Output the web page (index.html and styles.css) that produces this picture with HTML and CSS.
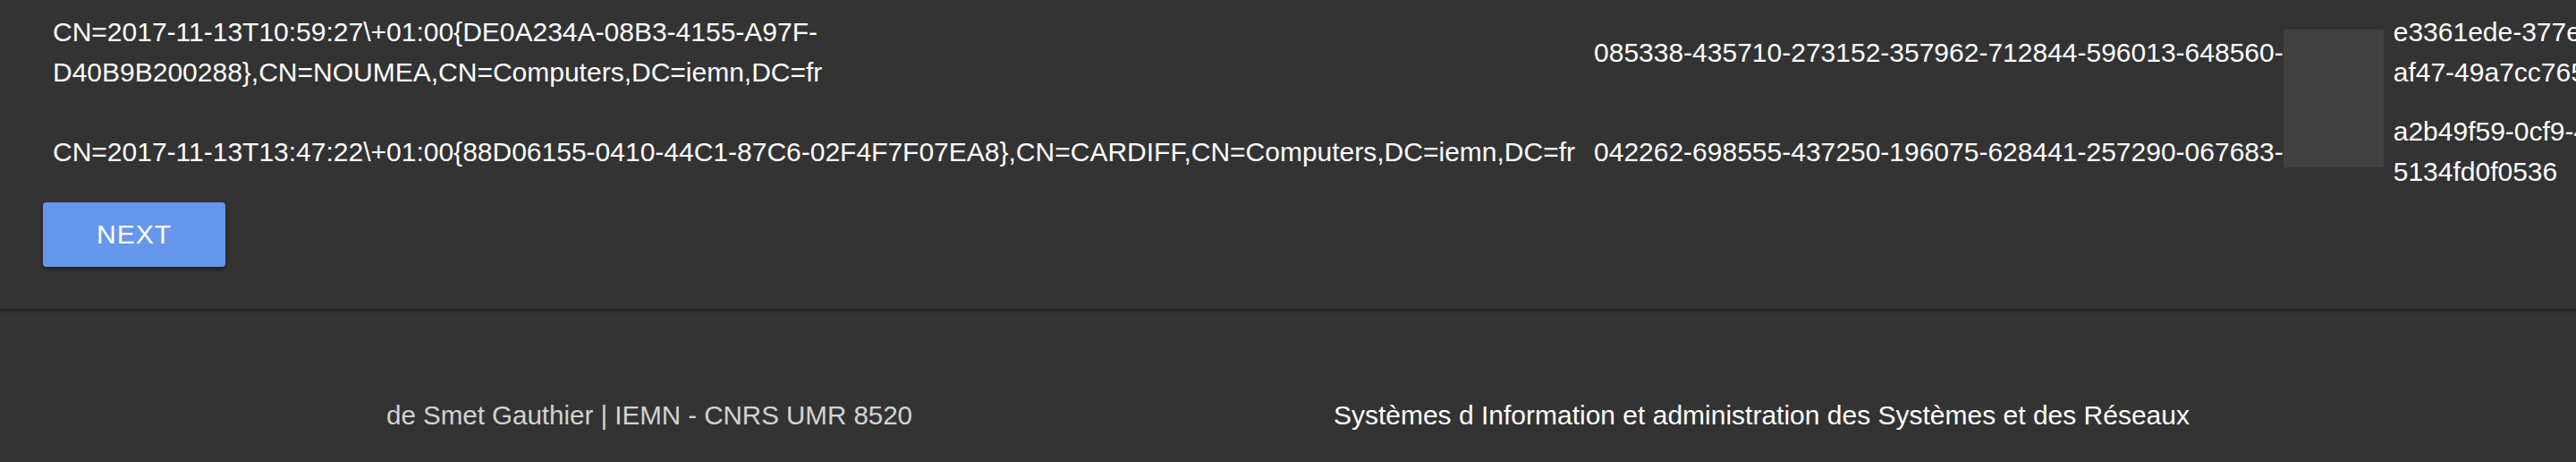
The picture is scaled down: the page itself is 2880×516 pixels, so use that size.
FILE: index.html
```html
<!DOCTYPE html>
<html lang="fr">
<head>
<meta charset="utf-8">
<title>Computers</title>
<link rel="stylesheet" href="styles.css">
</head>
<body>
<main class="main">
  <div class="grid">
    <div class="cell dn">CN=2017-11-13T10:59:27\+01:00{DE0A234A-08B3-4155-A97F-D40B9B200288},CN=NOUMEA,CN=Computers,DC=iemn,DC=fr</div>
    <div class="cell sid">085338-435710-273152-357962-712844-596013-648560-</div>
    <div class="blank"></div>
    <div class="cell guid">e3361ede-377e-4a3d-af47-49a7cc765e2d</div>

    <div class="cell dn nowrap">CN=2017-11-13T13:47:22\+01:00{88D06155-0410-44C1-87C6-02F4F7F07EA8},CN=CARDIFF,CN=Computers,DC=iemn,DC=fr</div>
    <div class="cell sid">042262-698555-437250-196075-628441-257290-067683-</div>
    <div class="cell guid">a2b49f59-0cf9-4ff1-af1f-5134fd0f0536</div>
  </div>
  <div class="actions">
    <button class="btn" type="button">NEXT</button>
  </div>
</main>
<footer class="footer">
  <div class="footer-inner">
    <span class="copy">de Smet Gauthier | IEMN - CNRS UMR 8520</span>
    <span class="title">Systèmes d Information et administration des Systèmes et des Réseaux</span>
  </div>
</footer>
</body>
</html>
```

FILE: styles.css
```css
html, body {
  margin: 0;
  padding: 0;
  background: #333333;
  overflow: hidden;
}

body {
  font-family: "Liberation Sans", Arial, Helvetica, sans-serif;
  font-size: 30px;
  line-height: 45px;
  color: #ffffff;
  width: 2880px;
  height: 516px;
}

.main {
  background: #333333;
  height: 345px;
  box-sizing: border-box;
  padding: 13px 0 0 0;
  box-shadow: 0 2px 4px rgba(0, 0, 0, 0.35);
  position: relative;
  z-index: 1;
  overflow: hidden;
}

.grid {
  display: grid;
  grid-template-columns: min-content max-content 112px 356px;
  grid-template-rows: auto auto;
  row-gap: 21px;
  padding-left: 59px;
  align-items: center;
}

.cell {
  min-width: 0;
}

.nowrap {
  white-space: nowrap;
}

.sid {
  white-space: nowrap;
  padding-left: 21px;
}

.guid {
  box-sizing: border-box;
  padding-left: 11px;
  width: 356px;
}

.blank {
  grid-column: 3;
  grid-row: 1 / span 2;
  align-self: start;
  margin-top: 20px;
  width: 112px;
  height: 154px;
  background: #414141;
}

.actions {
  padding-left: 48px;
  margin-top: 12px;
}

.btn {
  display: block;
  width: 204px;
  height: 72px;
  border: none;
  border-radius: 4px;
  background: #6797ed;
  color: #ffffff;
  font-family: "Liberation Sans", Arial, Helvetica, sans-serif;
  font-size: 30px;
  letter-spacing: 1px;
  padding: 0;
  box-shadow: 0 3px 5px rgba(0, 0, 0, 0.35);
}

.footer {
  background: #333333;
  height: 171px;
  box-sizing: border-box;
  padding-top: 96px;
}

.footer-inner {
  width: 2016px;
  margin: 0 auto;
  display: flex;
  justify-content: space-between;
  align-items: baseline;
}

.copy {
  color: rgba(255, 255, 255, 0.8);
  font-size: 29.5px;
}

.title {
  color: #ffffff;
}
```
